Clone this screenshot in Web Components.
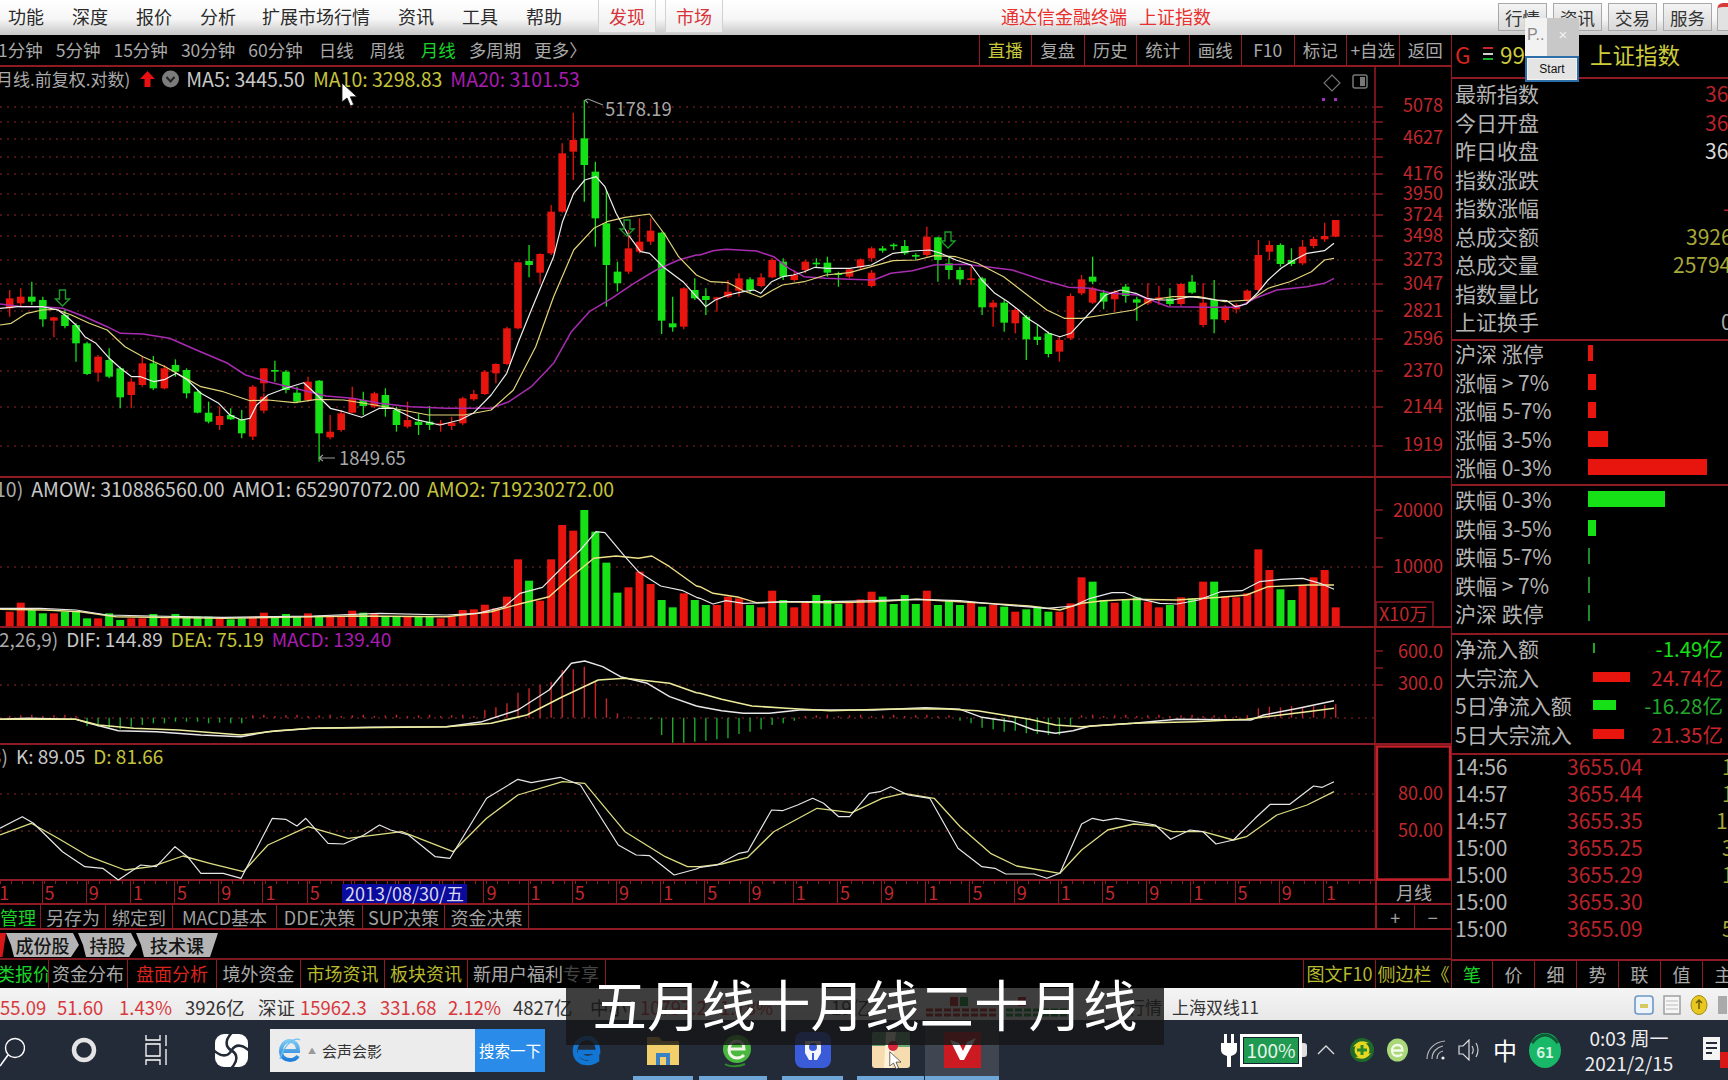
<!DOCTYPE html>
<html lang="zh">
<head>
<meta charset="utf-8">
<title>通达信金融终端</title>
<style>
html,body{margin:0;padding:0;background:#000;width:1728px;height:1080px;overflow:hidden;
  font-family:"Noto Sans CJK SC","Noto Sans",sans-serif;}
.work{display:flex;height:953px;}
.left{width:1451px;flex:none;}
</style>
</head>
<body>
<tdx-menubar></tdx-menubar>
<div class="work">
  <div class="left">
    <tdx-period-bar></tdx-period-bar>
    <tdx-price-chart top="67" height="411">
      <span style="margin-left:-4px;color:#aaa;font-size:17px">月线.前复权.对数)</span>
      <tdx-legend-icons></tdx-legend-icons>
      <span style="color:#c8c8c8">MA5: 3445.50</span>
      <span style="color:#c4c43c">MA10: 3298.83</span>
      <span style="color:#a81cb0">MA20: 3101.53</span>
    </tdx-price-chart>
    <tdx-volume-chart top="478" height="150">
      <span style="margin-left:-5px;color:#aaa">10)</span>
      <span style="color:#c8c8c8">AMOW: 310886560.00</span>
      <span style="color:#c8c8c8">AMO1: 652907072.00</span>
      <span style="color:#c4c43c;margin-left:-1px">AMO2: 719230272.00</span>
    </tdx-volume-chart>
    <tdx-macd-chart top="628" height="117">
      <span style="margin-left:-1px;color:#aaa;font-size:19px">2,26,9)</span>
      <span style="color:#c8c8c8;font-size:19px">DIF: 144.89</span>
      <span style="color:#c4c43c;font-size:19px">DEA: 75.19</span>
      <span style="color:#a81cb0;font-size:19px">MACD: 139.40</span>
    </tdx-macd-chart>
    <tdx-kdj-chart top="745" height="136">
      <span style="margin-left:-9px;color:#aaa;font-size:19px">3)</span>
      <span style="color:#c8c8c8;font-size:19px">K: 89.05</span>
      <span style="color:#c4c43c;font-size:19px">D: 81.66</span>
    </tdx-kdj-chart>
    <tdx-time-axis></tdx-time-axis>
    <tdx-tool-row></tdx-tool-row>
    <tdx-tab-row></tdx-tab-row>
    <tdx-bottom-tabs></tdx-bottom-tabs>
  </div>
  <tdx-side-panel></tdx-side-panel>
</div>
<tdx-status-bar></tdx-status-bar>
<tdx-taskbar></tdx-taskbar>
<tdx-float-window></tdx-float-window>
<tdx-caption>五月线十月线二十月线</tdx-caption>
<tdx-cursor style="left:341px;top:82px"></tdx-cursor>
<tdx-cursor style="left:889px;top:1051px;transform:scale(.75);transform-origin:0 0"></tdx-cursor>

<script>
(function () {

var RED = "#e8140e", GREEN = "#16e016", LINE = "#8f1a22", AXIS = "#c0282e";

// candles read off the reference: [colour, body top, body bottom, high, low]
// y is in crop units, page y = 80 + z / 3
var CANDLES = [
"r 655 685 630 710","r 650 670 625 680","g 650 665 605 675","g 660 718 650 740","r 712 722 710 772",
"g 705 738 690 745","g 735 790 730 845","g 790 882 785 885","r 830 878 825 905","g 840 890 805 895",
"g 865 952 860 985","r 905 945 895 985","r 850 915 830 920","g 850 925 828 930","r 865 925 855 928",
"g 855 875 838 890","g 870 940 865 955","g 935 998 930 1000","g 998 1025 965 1030","r 1008 1035 980 1050",
"g 1005 1018 985 1020","g 1018 1060 990 1075","r 920 1070 915 1080","r 950 992 940 1000","g 870 875 842 905",
"g 875 930 870 940","g 938 965 920 970","r 905 960 890 965","g 902 1060 900 1145","r 1055 1072 1005 1078",
"r 1000 1050 990 1055","r 955 998 920 1000","g 960 978 935 1005","r 940 980 935 985","g 945 985 925 1010",
"g 990 1035 980 1055","r 1020 1040 965 1045","g 1025 1035 1000 1065","g 1025 1035 978 1050","r 1030 1035 1020 1055",
"r 1028 1038 1010 1050","r 955 1030 950 1035","r 942 958 930 962","r 875 942 870 945","r 852 880 850 910",
"r 745 852 740 855","r 547 745 545 748","g 543 555 495 592","r 522 578 520 610","r 395 520 375 525",
"r 220 395 190 398","r 180 215 98 300","g 175 255 60 365","g 275 415 245 500","g 430 555 330 680",
"g 575 610 545 635","r 505 575 450 582","r 485 515 415 520","r 452 485 415 495","g 458 722 455 762",
"g 730 742 650 755","r 625 740 622 748","g 630 655 595 660","g 648 660 625 705","r 652 658 650 695",
"r 635 650 600 655","r 595 632 580 650","g 598 630 592 640","r 592 618 580 622","r 540 592 535 595",
"g 545 590 535 600","r 585 600 570 605","r 545 570 540 580","g 548 553 535 562","g 548 578 530 590",
"g 580 585 575 620","r 568 590 565 595","r 538 562 535 570","r 505 535 500 545","g 505 512 498 518",
"g 494 498 490 510","g 498 520 480 525","g 525 530 520 540","r 470 525 440 530","g 472 540 470 605",
"g 550 570 530 598","g 570 598 560 615","r 595 598 560 615","g 595 682 590 705","r 668 682 660 740",
"g 668 728 660 755","r 690 730 685 760","g 710 778 705 840","g 770 780 735 795","g 760 822 755 832",
"r 780 815 770 845","r 648 775 640 780","r 598 640 585 645","g 590 605 530 612","g 638 665 630 688",
"r 635 658 630 695","g 620 648 612 668","g 658 668 650 722","r 655 670 610 675","r 652 660 618 675",
"g 655 672 625 678","r 612 672 608 678","g 605 638 585 642","r 668 735 610 742","g 660 718 600 760",
"r 680 720 675 728","r 675 688 670 700","r 632 662 628 670","r 525 630 480 635","r 495 515 482 540",
"g 495 552 490 560","g 540 552 505 558","r 500 550 480 555","r 477 498 470 505","r 468 478 428 485",
"r 420 470 420 472"];
// the few spots where the picture has a second body on the same column
var CANDLE_EXTRA = [[23,"r 865 910 865 935"],[78,"r 578 618 570 622"],[98,"r 625 668 620 672"]];

// volume bar tops, page y = 470 + z / 3
var VOLUME = [425,398,420,430,430,425,425,445,445,430,450,445,445,432,445,432,440,440,440,445,448,445,440,428,438,432,440,430,440,440,438,422,428,430,438,440,440,440,440,445,440,420,418,404,415,380,268,332,392,268,165,182,120,185,278,368,352,305,342,390,412,370,390,
405,405,380,385,405,412,362,390,412,398,375,390,402,398,388,365,380,402,375,402,362,405,390,405,398,410,405,410,425,418,410,425,425,400,322,335,390,398,388,382,395,412,405,382,385,335,335,380,382,370,238,300,358,390,345,322,300,412];

var MACD = {};
[[7,768],[8,770],[9,775],[10,778],[11,770],[12,765],[13,760],[14,760],[15,755],[16,755],[17,755],[18,760],[19,758],[20,760],[21,760],
 [43,720],[44,712],[45,700],[46,668],[47,655],[48,645],[49,635],[50,600],[51,598],[52,590],[53,635],[54,685],[55,730],[56,740],[57,745],[58,748],
 [59,795],[60,818],[61,818],[62,815],[63,812],[64,808],[65,805],[66,792],[67,785],[68,778],[69,765],[70,760],[71,752],
 [86,752],[87,760],[88,773],[89,778],[90,785],[91,782],[92,790],[93,792],[94,795],[95,795],[96,765],
 [113,715],[114,710],[115,712],[116,708],[117,712],[118,708],[119,705],[120,703]].forEach(function (p) { MACD[p[0]] = p[1]; });

function candleX(i) { return 9.7 + 11.05 * i; }

// line points come from two crops with their own x scale
function linePoints(left, right, y0) {
    var out = [];
    left.forEach(function (p) { out.push((p[0] / 2.24).toFixed(1) + "," + (y0 + p[1] / 3).toFixed(1)); });
    right.forEach(function (p) { out.push((700 + p[0] / 2.306).toFixed(1) + "," + (y0 + p[1] / 3).toFixed(1)); });
    return out.join(" ");
}

function polyline(points, color, width) {
    return '<polyline fill="none" stroke-linejoin="round" points="' + points + '" stroke="' + color + '" stroke-width="' + (width || 1.3) + '"/>';
}

class ChartPane extends HTMLElement {

    constructor() {
        super();
        this.attachShadow({ mode: "open" });
        var top = +this.getAttribute("top"), h = +this.getAttribute("height");
        this.top = top;
        this.h = h;
        this.shadowRoot.innerHTML = `
        <style>
        :host{display:block;position:relative;width:1451px;height:${h}px;overflow:hidden;}
        svg{display:block;}
        .legend{position:absolute;left:0;top:${top == 67 ? 0 : -1}px;display:flex;align-items:center;gap:8px;
            font-size:19.5px;line-height:24px;white-space:nowrap;}
        text{font-size:18px;fill:${AXIS};}
        </style>
        <svg width="1451" height="${h}" viewBox="0 ${top} 1451 ${h}"></svg>
        <div class="legend"><slot></slot></div>
        `;
    }

    connectedCallback() {
        this.shadowRoot.querySelector("svg").innerHTML = this.frame() + this.plot();
    }

    // grid, ticks, labels and the pane borders. Subclasses give the numbers.
    frame() {
        var s = "", t = this.top, h = this.h;
        this.grid().forEach(function (y) {
            s += '<line x1="0" x2="1375" y1="' + y + '" y2="' + y + '" stroke="#8a2a2c" stroke-width="1.2" stroke-dasharray="2 5"/>';
        });
        this.ticks().forEach(function (y) {
            s += '<line x1="1375" x2="1383" y1="' + y + '" y2="' + y + '" stroke="' + LINE + '" stroke-width="1.4"/>';
        });
        this.labels().forEach(function (l) {
            s += '<text x="1443" y="' + (l[1] + 6.5) + '" text-anchor="end">' + l[0] + '</text>';
        });
        s += '<line x1="1375" x2="1375" y1="' + t + '" y2="' + (t + h) + '" stroke="' + LINE + '" stroke-width="1.6"/>';
        s += '<line x1="0" x2="1451" y1="' + (t + h - 1) + '" y2="' + (t + h - 1) + '" stroke="' + LINE + '" stroke-width="2"/>';
        return s;
    }
    grid() { return []; }
    ticks() { return []; }
    labels() { return []; }
    plot() { return ""; }
}

class PriceChart extends ChartPane {
    grid() { return [107,122,139,157,174,194,215,236,260,284,311,339,371,407,446]; }
    ticks() { return [107,122,139,157,174,194,215,236,260,284,311,339,371,407,446]; }
    labels() {
        return [["5078",105],["4627",137],["4176",173],["3950",193],["3724",214],["3498",235],["3273",259],
                ["3047",283],["2821",310],["2596",338],["2370",370],["2144",406],["1919",444]];
    }
    candle(i, spec) {
        var p = spec.split(" "), c = p[0] == "r" ? RED : GREEN, x = candleX(i);
        var top = 80 + p[1] / 3, bot = 80 + p[2] / 3;
        return '<line x1="' + x + '" x2="' + x + '" y1="' + (80 + p[3] / 3) + '" y2="' + (80 + p[4] / 3) + '" stroke="' + c + '" stroke-width="1.3"/>' +
            '<rect x="' + (x - 3.8) + '" y="' + top + '" width="7.6" height="' + Math.max(bot - top, 1.6) + '" fill="' + c + '"/>';
    }
    plot() {
        var s = "", self = this;
        CANDLES.forEach(function (c, i) { s += self.candle(i, c); });
        CANDLE_EXTRA.forEach(function (e) { s += self.candle(e[0], e[1]); });

        s += polyline(linePoints(
            [[0,672],[50,680],[95,680],[140,685],[190,710],[240,740],[270,760],[320,762],[380,775],[440,810],[510,850],[550,885],[600,905],[660,925],[730,948],[790,955],[850,970],[920,980],[1000,985],[1100,985],[1140,965],[1190,920],[1240,850],[1280,755],[1320,695],[1370,655],[1420,610],[1470,570],[1520,540],[1560,525]],
            [[0,525],[30,512],[60,508],[130,513],[170,530],[205,565],[240,590],[290,595],[345,598],[400,600],[440,580],[490,572],[540,555],[610,553],[660,560],[720,570],[790,600],[850,622],[900,625],[950,640],[1010,645],[1080,680],[1170,682],[1240,682],[1280,655],[1330,630],[1400,620],[1440,610],[1462,595]], 80), "#a82cb0", 1.5);
        s += polyline(linePoints(
            [[0,735],[25,730],[60,700],[95,690],[125,688],[160,705],[200,730],[240,750],[280,800],[320,830],[370,860],[410,890],[450,920],[500,935],[560,962],[600,960],[660,968],[710,958],[770,960],[840,975],[900,990],[960,1005],[1040,1005],[1100,990],[1150,930],[1200,800],[1240,650],[1285,510],[1330,445],[1360,425],[1400,412],[1455,402],[1490,465],[1520,530],[1560,585]],
            [[0,590],[25,605],[65,608],[100,632],[140,652],[165,632],[190,615],[240,605],[290,585],[345,578],[395,560],[445,542],[500,540],[540,527],[590,530],[640,550],[700,590],[760,650],[800,690],[840,715],[880,715],[930,705],[1000,690],[1040,660],[1090,650],[1150,650],[1210,665],[1270,660],[1310,625],[1360,605],[1410,575],[1440,540],[1462,535]], 80), "#e2d478", 1.2);
        s += polyline(linePoints(
            [[0,685],[40,680],[95,680],[130,690],[150,710],[170,735],[190,770],[215,790],[245,835],[270,865],[295,890],[315,890],[345,905],[370,898],[395,880],[420,900],[450,940],[490,970],[515,1005],[540,1020],[560,1015],[575,975],[600,945],[640,925],[680,908],[710,945],[740,985],[770,995],[810,1012],[850,985],[880,985],[930,1018],[985,1035],[1030,1020],[1060,1000],[1100,945],[1135,880],[1160,790],[1190,690],[1215,610],[1240,530],[1260,425],[1285,340],[1310,300],[1335,290],[1355,320],[1380,400],[1405,460],[1435,515],[1455,520],[1485,560],[1530,605],[1560,650]],
            [[0,660],[13,680],[35,660],[65,645],[100,635],[125,630],[140,640],[165,605],[190,590],[215,585],[240,575],[265,562],[295,565],[345,565],[395,555],[445,520],[490,513],[530,510],[555,520],[590,540],[625,555],[650,600],[680,640],[710,665],[735,690],[755,715],[780,735],[805,760],[830,770],[855,760],[880,725],[905,690],[935,645],[970,630],[1005,640],[1030,655],[1060,660],[1090,660],[1130,650],[1165,655],[1190,660],[1215,662],[1235,680],[1260,672],[1285,640],[1310,600],[1340,565],[1370,540],[1400,520],[1440,512],[1462,490]], 80), "#eeeeee", 1.2);

        // hollow down arrows on the turning points
        [[62.5,298],[627,228],[948,240]].forEach(function (a) {
            s += '<path transform="translate(' + (a[0] - 7) + ' ' + (a[1] - 8) + ')" d="M4 0h6v9h4l-7 7-7-7h4z" fill="none" stroke="#1c9a2a" stroke-width="1.4"/>';
        });

        // high and low marks
        s += '<path d="M585 100l3-1 15 6M585 100l3 3" fill="none" stroke="#999" stroke-width="1.1"/>';
        s += '<text x="605" y="115.5" style="fill:#a8a8a8;font-size:18.5px">5178.19</text>';
        s += '<path d="M319 458h16M319 458l4-3M319 458l4 3" fill="none" stroke="#999" stroke-width="1.1"/>';
        s += '<text x="339" y="464.5" style="fill:#a8a8a8;font-size:18.5px">1849.65</text>';

        // corner tools
        s += '<path d="M1332 75l8 8-8 8-8-8z" fill="none" stroke="#777" stroke-width="1.1"/>';
        s += '<rect x="1353" y="75" width="14" height="13" rx="2" fill="none" stroke="#777" stroke-width="1.5"/><rect x="1360" y="77" width="5" height="9" fill="#777"/>';
        s += '<rect x="1322" y="98" width="3" height="3" fill="#a030c0"/><rect x="1334" y="98" width="3" height="3" fill="#a030c0"/>';
        return s;
    }
}

class VolumeChart extends ChartPane {
    grid() { return [567]; }
    ticks() { return [510,538,567]; }
    labels() { return [["20000",510],["10000",566]]; }
    plot() {
        var s = "";
        VOLUME.forEach(function (z, i) {
            var c = CANDLES[i].charAt(0) == "r" ? RED : GREEN, y = 470 + z / 3;
            s += '<rect x="' + (candleX(i) - 4) + '" y="' + y + '" width="8" height="' + (626 - y) + '" fill="' + c + '"/>';
        });
        s += polyline(linePoints(
            [[0,418],[100,420],[180,425],[260,440],[500,445],[800,438],[1000,440],[1100,425],[1170,400],[1230,380],[1280,320],[1330,265],[1380,258],[1430,265],[1460,258],[1500,290],[1560,348]],
            [[0,350],[30,370],[90,382],[130,398],[200,395],[300,398],[400,395],[500,388],[640,398],[760,408],[830,420],[880,400],[930,392],[1000,388],[1100,390],[1200,382],[1260,375],[1310,350],[1400,345],[1462,345]], 470), "#f0e088", 1.4);
        s += polyline(linePoints(
            [[0,415],[90,415],[170,420],[240,435],[340,438],[500,442],[700,438],[850,430],[1000,435],[1070,430],[1130,410],[1165,370],[1215,352],[1265,285],[1300,240],[1335,185],[1355,188],[1400,260],[1430,305],[1480,348],[1530,362],[1560,382]],
            [[0,385],[30,402],[60,392],[100,400],[150,398],[200,395],[300,395],[400,392],[500,388],[600,392],[700,405],[800,415],[860,408],[900,385],[950,368],[980,368],[1010,385],[1060,400],[1100,402],[1150,390],[1200,365],[1250,362],[1290,335],[1340,328],[1390,325],[1430,340],[1462,358]], 470), "#e8e8e8", 1.2);
        s += '<rect x="1376" y="602" width="57" height="25" fill="none" stroke="' + LINE + '" stroke-width="1.4"/>';
        s += '<text x="1379" y="621">X10万</text>';
        return s;
    }
}

class MacdChart extends ChartPane {
    grid() { return [685,718]; }
    ticks() { return [651,668,685]; }
    labels() { return [["600.0",651],["300.0",683]]; }
    plot() {
        var s = "";
        for (var i = 0; i < 121; i++) {
            var z = MACD[i] !== undefined ? MACD[i] : 738 - (i % 3) * 2;
            var y = 470 + z / 3;
            s += '<line x1="' + candleX(i) + '" x2="' + candleX(i) + '" y1="717.7" y2="' + y + '" stroke="' + (z < 744 ? "#c8242a" : "#1ea82a") + '" stroke-width="1.4"/>';
        }
        s += polyline(linePoints(
            [[0,748],[60,745],[170,748],[200,760],[265,782],[350,785],[450,795],[540,800],[600,785],[700,775],[830,772],[1000,770],[1080,755],[1160,720],[1230,660],[1280,580],[1310,573],[1350,590],[1390,620],[1450,640],[1500,680],[1560,708]],
            [[0,710],[50,722],[100,730],[160,730],[230,720],[400,720],[520,713],[600,718],[650,742],[720,755],[770,780],[820,790],[860,782],[900,768],[1000,760],[1100,748],[1270,750],[1300,735],[1380,715],[1462,692]], 470), "#e8e8e8", 1.4);
        s += polyline(linePoints(
            [[0,748],[170,748],[220,765],[300,775],[400,780],[540,795],[620,782],[700,775],[1000,770],[1100,760],[1180,735],[1260,680],[1340,630],[1400,625],[1500,640],[1560,668]],
            [[0,670],[50,688],[120,708],[200,715],[300,722],[420,718],[560,716],[640,722],[700,735],[760,748],[820,765],[880,770],[1000,760],[1140,755],[1260,748],[1320,738],[1400,725],[1462,715]], 470), "#ecec9a", 1.6);
        return s;
    }
}

class KdjChart extends ChartPane {
    grid() { return [794,831]; }
    ticks() { return []; }
    labels() { return [["80.00",793],["50.00",830]]; }
    plot() {
        var s = "";
        s += polyline(linePoints(
            [[0,1095],[70,1060],[130,1105],[200,1160],[280,1200],[340,1190],[410,1158],[470,1180],[545,1205],[600,1125],[690,1070],[780,1105],[900,1085],[1015,1145],[1090,1045],[1160,975],[1260,935],[1310,940],[1400,1085],[1490,1160],[1540,1190],[1560,1190]],
            [[0,1190],[50,1182],[110,1162],[170,1085],[220,1050],[270,1015],[350,1028],[420,985],[470,970],[540,985],[600,1070],[670,1150],[730,1188],[830,1210],[880,1140],[940,1080],[1000,1062],[1050,1068],[1090,1085],[1160,1085],[1230,1110],[1260,1100],[1330,1035],[1400,1005],[1462,965]], 470), "#dcdc80", 1.3);
        s += polyline(linePoints(
            [[0,1075],[50,1040],[75,1060],[140,1145],[190,1190],[230,1195],[265,1230],[315,1185],[350,1190],[392,1130],[420,1160],[450,1210],[500,1210],[540,1225],[610,1045],[640,1048],[665,1068],[685,1045],[735,1120],[770,1122],[815,1095],[850,1065],[875,1080],[915,1095],[975,1160],[1008,1165],[1090,985],[1160,928],[1190,938],[1255,922],[1300,945],[1385,1125],[1425,1155],[1455,1157],[1510,1215],[1560,1197]],
            [[0,1192],[40,1185],[90,1150],[110,1145],[165,1020],[190,1022],[225,1005],[260,985],[285,1000],[320,1040],[345,1040],[390,970],[415,965],[440,950],[480,975],[530,985],[595,1135],[650,1190],[680,1195],[705,1212],[770,1212],[800,1225],[830,1210],[880,1062],[905,1045],[930,1052],[960,1045],[1050,1065],[1085,1108],[1130,1080],[1160,1085],[1190,1122],[1230,1110],[1280,1045],[1315,1003],[1360,1003],[1415,948],[1435,952],[1462,935]], 470), "#e6e6e6", 1.2);
        s += '<rect x="1377" y="746.5" width="73" height="133" fill="none" stroke="#c4202a" stroke-width="2.4"/>';
        return s;
    }
}

class LegendIcons extends HTMLElement {
    constructor() {
        super();
        this.attachShadow({ mode: "open" });
        this.shadowRoot.innerHTML = `
        <style>:host{display:flex;align-items:center;gap:6px;margin:0 -1px 0 1px;}svg{display:block;}</style>
        <svg width="17" height="20" viewBox="0 0 17 20"><path d="M8.5 2L16 10h-4.5v8h-6v-8H1z" fill="#e81010"/></svg>
        <svg width="17" height="18" viewBox="0 0 17 18"><circle cx="8.5" cy="9" r="8.5" fill="#7c7c7c"/><path d="M4.5 7l4 4.5 4-4.5" fill="none" stroke="#222" stroke-width="2"/></svg>
        `;
    }
}

class MenuBar extends HTMLElement {
    constructor() {
        super();
        this.attachShadow({ mode: "open" });
        var items = ["功能","深度","报价","分析","扩展市场行情","资讯","工具","帮助"];
        var right = ["行情","资讯","交易","服务"];
        this.shadowRoot.innerHTML = `
        <style>
        :host{display:flex;height:35px;box-sizing:border-box;padding-left:8px;font-size:18px;line-height:33px;color:#2a2a2a;
            background:linear-gradient(#ffffff,#f6f6f6 55%,#c6c6c6);white-space:nowrap;}
        .menu{display:flex;gap:28px;}
        .menu span:nth-child(5){margin-left:-2px;}
        .hot{width:58px;height:33px;text-align:center;color:#d8343a;box-sizing:border-box;
            border:1px solid #d2d2d2;border-top:none;background:linear-gradient(#fff,#ececec);}
        .hot.first{margin-left:36px;}
        .hot.second{margin-left:9px;}
        .title{margin-left:278px;color:#e8302c;}
        .title b{font-weight:400;margin-left:12px;}
        .right{margin-left:auto;display:flex;gap:6px;padding-top:3px;}
        .btn{width:49px;height:28px;line-height:27px;box-sizing:border-box;text-align:center;font-size:17.5px;
            border:1px solid #a8a8a8;background:linear-gradient(#f4f4f4,#d8d8d8);color:#333;}
        .stub{width:11px;height:28px;box-sizing:border-box;background:#e2e2e2;border:1px solid #a8a8a8;border-right:none;
            border-top:4px solid #d83a3a;border-radius:6px 0 0 0;margin-left:-1px;}
        </style>
        <div class="menu">${items.map(function (t) { return "<span>" + t + "</span>"; }).join("")}</div>
        <div class="hot first">发现</div>
        <div class="hot second">市场</div>
        <div class="title">通达信金融终端<b>上证指数</b></div>
        <div class="right">${right.map(function (t) { return '<div class="btn">' + t + "</div>"; }).join("")}<div class="stub"></div></div>
        `;
    }
}

class PeriodBar extends HTMLElement {
    constructor() {
        super();
        this.attachShadow({ mode: "open" });
        var left = ["1分钟","5分钟","15分钟","30分钟","60分钟","日线","周线","月线","多周期","更多〉"];
        var right = ["直播","复盘","历史","统计","画线","F10","标记","+自选","返回"];
        this.shadowRoot.innerHTML = `
        <style>
        :host{display:flex;width:1451px;height:32px;box-sizing:border-box;border-bottom:2px solid ${LINE};
            font-size:17.5px;line-height:30px;color:#a8a8a8;white-space:nowrap;}
        .left{display:flex;gap:13px;margin-left:-2px;}
        .wide{margin-left:3px;}
        .on{color:#19d428;}
        .right{margin-left:auto;display:flex;}
        .right div{width:52.5px;text-align:center;box-sizing:border-box;border-left:1px solid ${LINE};}
        .right .live{color:#c8c83c;}
        </style>
        <div class="left">${left.map(function (t) {
            var cls = t == "月线" ? "wide on" : (t.length == 2 ? "wide" : "");
            return '<span class="' + cls + '">' + t + "</span>";
        }).join("")}</div>
        <div class="right">${right.map(function (t, i) {
            return "<div" + (i == 0 ? ' class="live"' : "") + ">" + t + "</div>";
        }).join("")}</div>
        `;
    }
}

class TimeAxis extends HTMLElement {
    constructor() {
        super();
        this.attachShadow({ mode: "open" });
        var cells = "", marks = ["1","5","9"];
        for (var i = 0; i < 31; i++) {
            cells += '<div class="cell">' + marks[i % 3] + "</div>";
        }
        this.shadowRoot.innerHTML = `
        <style>
        :host{display:flex;position:relative;width:1451px;height:24px;box-sizing:border-box;
            border-bottom:2px solid ${LINE};font-size:18px;line-height:23px;color:${AXIS};white-space:nowrap;}
        .track{width:1375px;flex:none;display:flex;overflow:hidden;box-sizing:border-box;
            background:repeating-linear-gradient(90deg,${LINE} 0 1px,transparent 1px 11.05px) 0 0/100% 3px no-repeat;}
        .cell{width:44.2px;flex:none;box-sizing:border-box;padding-left:2px;border-left:1px solid ${LINE};}
        .cell:first-child{margin-left:-2.7px;border-left:none;}
        .date{position:absolute;left:342px;top:3px;width:125px;height:19px;line-height:19px;background:#0a0a9c;
            color:#d8d8f0;text-align:center;font-size:18px;}
        .unit{flex:1;border-left:2px solid ${LINE};text-align:center;color:#a8a8a8;box-sizing:border-box;}
        </style>
        <div class="track">${cells}</div>
        <div class="date">2013/08/30/五</div>
        <div class="unit">月线</div>
        `;
    }
}

class ToolRow extends HTMLElement {
    constructor() {
        super();
        this.attachShadow({ mode: "open" });
        var items = [["管理",41],["另存为",65],["绑定到",67],["MACD基本",104],["DDE决策",86],["SUP决策",82],["资金决策",84]];
        this.shadowRoot.innerHTML = `
        <style>
        :host{display:flex;width:1451px;height:25px;box-sizing:border-box;border-bottom:2px solid ${LINE};
            font-size:18px;line-height:24px;color:#a0a0a0;white-space:nowrap;}
        .tools{width:1375px;flex:none;display:flex;}
        .tools div{display:flex;justify-content:center;box-sizing:border-box;border-right:1px solid ${LINE};overflow:hidden;}
        .tools div:first-child{color:#19d428;justify-content:flex-end;padding-right:4px;}
        .zoom{flex:1;display:flex;border-left:2px solid ${LINE};text-align:center;}
        .zoom div{flex:1;}
        .zoom div:first-child{border-right:1px solid ${LINE};}
        </style>
        <div class="tools">${items.map(function (t) {
            return '<div style="width:' + t[1] + 'px">' + t[0] + "</div>";
        }).join("")}</div>
        <div class="zoom"><div>+</div><div>−</div></div>
        `;
    }
}

class TabRow extends HTMLElement {
    constructor() {
        super();
        this.attachShadow({ mode: "open" });
        this.shadowRoot.innerHTML = `
        <style>
        :host{display:flex;width:1451px;height:30px;box-sizing:border-box;border-bottom:2px solid #7a1820;padding-top:3px;
            font-size:18px;line-height:24px;color:#151515;white-space:nowrap;font-weight:500;}
        .stub{width:6px;height:24px;background:#d81818;clip-path:polygon(0 0,100% 0,40% 100%,0 100%);}
        .tab{height:24px;background:#b4b4b4;text-align:center;margin-left:-1px;
            clip-path:polygon(0 0,calc(100% - 6px) 0,100% 50%,calc(100% - 8px) 100%,8px 100%,5px 50%);}
        </style>
        <div class="stub"></div>
        <div class="tab" style="width:73px;margin-left:0">成份股</div>
        <div class="tab" style="width:59px;margin-left:-1px">持股</div>
        <div class="tab" style="width:82px;margin-left:-1px;clip-path:polygon(0 0,100% 0,calc(100% - 8px) 100%,8px 100%,5px 50%)">技术课</div>
        `;
    }
}

class BottomTabs extends HTMLElement {
    constructor() {
        super();
        this.attachShadow({ mode: "open" });
        var items = [["类报价",49,"#19d428"],["资金分布",79,"#a8a8a8"],["盘面分析",89,"#d8241c"],["境外资金",84,"#a8a8a8"],
                     ["市场资讯",84,"#b8b82c"],["板块资讯",83,"#b8b82c"]];
        this.shadowRoot.innerHTML = `
        <style>
        :host{display:flex;width:1451px;height:28px;font-size:18px;line-height:26px;white-space:nowrap;}
        .t{display:flex;justify-content:center;box-sizing:border-box;border-right:1px solid ${LINE};overflow:hidden;}
        .t:first-child{justify-content:flex-end;padding-right:4px;}
        .fade{width:138px;color:#a8a8a8;text-align:left;padding-left:5px;box-sizing:border-box;border-right:1px solid ${LINE};}
        .fade i{font-style:normal;color:#444;}
        .end{margin-left:auto;display:flex;color:#b8b82c;}
        .end div{box-sizing:border-box;border-left:1px solid ${LINE};text-align:center;}
        </style>
        ${items.map(function (t) {
            return '<div class="t" style="width:' + t[1] + "px;color:" + t[2] + '">' + t[0] + "</div>";
        }).join("")}
        <div class="fade">新用户福利<i>专享</i></div>
        <div class="end"><div style="width:72px">图文F10</div><div style="width:76px">侧边栏《</div></div>
        `;
    }
}

class SidePanel extends HTMLElement {
    constructor() {
        super();
        this.attachShadow({ mode: "open" });

        var quote = [["最新指数","36","#b8222a",250],["今日开盘","36","#b8222a",250],["昨日收盘","36","#d8d8d8",250],
                     ["指数涨跌","","",0],["指数涨幅","-","#b8222a",268],["总成交额","3926","#a8a838",231],
                     ["总成交量","25794","#a8a838",218],["指数量比","","",0],["上证换手","0","#a8a8a8",266]];
        var up = [["沪深 涨停",5],["涨幅 &gt; 7%",8],["涨幅 5-7%",8],["涨幅 3-5%",20],["涨幅 0-3%",119]];
        var down = [["跌幅 0-3%",77,16],["跌幅 3-5%",8,16],["跌幅 5-7%",2,16],["跌幅 &gt; 7%",2,16],["沪深 跌停",2,16]];
        var flow = [["净流入额",2,"-1.49亿",GREEN,"#1ea82a"],["大宗流入",37,"24.74亿","#c8242a",RED],
                    ["5日净流入额",23,"-16.28亿","#22a82e",GREEN],["5日大宗流入",31,"21.35亿","#c8242a",RED]];
        var ticks = [["14:56","3655.04","1"],["14:57","3655.44","1"],["14:57","3655.35","14"],["15:00","3655.25","3"],
                     ["15:00","3655.29","1"],["15:00","3655.30",""],["15:00","3655.09","5"]];
        var tabs = ["笔","价","细","势","联","值","主"];

        this.shadowRoot.innerHTML = `
        <style>
        :host{display:block;width:277px;height:953px;box-sizing:border-box;border-left:1.5px solid ${LINE};
            font-size:21px;color:#b4b4b4;white-space:nowrap;overflow:hidden;}
        section{box-sizing:border-box;border-bottom:2px solid ${LINE};padding-left:3px;overflow:hidden;}
        .head{height:44px;display:flex;align-items:center;font-size:22.5px;color:#cccc3c;padding:0 0 5px 3px;}
        .g{color:#d8241c;width:28px;}
        .eq{width:10px;height:13px;margin-right:7px;
            background:linear-gradient(#c8242a 0 2px,transparent 2px 5.5px,#d0d0d0 5.5px 7.5px,transparent 7.5px 11px,#18b02a 11px 13px);}
        .head b{font-weight:400;margin-left:15px;}
        .quote{height:262px;}
        .row{height:28.5px;line-height:28.5px;position:relative;}
        .row em{position:absolute;top:0;font-style:normal;}
        .up{height:145px;}
        .up .row:first-child{margin-top:-2px;}
        .down{height:149px;}
        .down .row:first-child{margin-top:-1px;}
        .bars{display:flex;align-items:center;}
        .bars label{width:133px;flex:none;}
        .bars i{display:block;height:16px;}
        .flow{height:120px;}
        .flow .row:first-child{margin-top:-1px;}
        .flow .bars label{width:138px;}
        .flow i{height:10px !important;}
        .flow em{right:5px;font-size:20.5px;}
        .ticks{height:206px;font-size:21px;}
        .tick{height:27px;line-height:27px;display:grid;grid-template-columns:112px 155px 1fr;}
        .tick:first-child{margin-top:-2px;}
        .tick span:nth-child(2){color:#b8222a;}
        .tick span:nth-child(3){color:#a8a838;}
        .tabs{display:flex;height:28px;font-size:18px;line-height:26px;color:#a8a8a8;}
        .tabs div{width:42px;flex:none;text-align:center;box-sizing:border-box;border-right:1px solid ${LINE};}
        .tabs div:first-child{color:#19d428;width:41px;}
        </style>
        <section class="head"><span class="g">G</span><span class="eq"></span>999999<b>上证指数</b></section>
        <section class="quote">${quote.map(function (q) {
            return '<div class="row">' + q[0] + (q[1] ? '<em style="left:' + q[3] + "px;color:" + q[2] + '">' + q[1] + "</em>" : "") + "</div>";
        }).join("")}</section>
        <section class="up">${up.map(function (u) {
            return '<div class="row bars"><label>' + u[0] + '</label><i style="width:' + u[1] + "px;background:" + RED + '"></i></div>';
        }).join("")}</section>
        <section class="down">${down.map(function (u) {
            return '<div class="row bars"><label>' + u[0] + '</label><i style="width:' + u[1] + "px;background:" + (u[1] > 2 ? GREEN : "#1e8a2a") + '"></i></div>';
        }).join("")}</section>
        <section class="flow">${flow.map(function (f) {
            return '<div class="row bars"><label>' + f[0] + '</label><i style="width:' + f[1] + "px;background:" + f[4] + '"></i><em style="color:' + f[3] + '">' + f[2] + "</em></div>";
        }).join("")}</section>
        <section class="ticks">${ticks.map(function (t) {
            var shift = t[2].length > 1 ? "margin-left:-6px" : "";
            return '<div class="tick"><span>' + t[0] + "</span><span>" + t[1] + '</span><span style="' + shift + '">' + t[2] + "</span></div>";
        }).join("")}</section>
        <div class="tabs">${tabs.map(function (t) { return "<div>" + t + "</div>"; }).join("")}</div>
        `;
    }
}

class StatusBar extends HTMLElement {
    constructor() {
        super();
        this.attachShadow({ mode: "open" });
        var R = "#d8383c", D = "#333";
        var items = [["55.09",R,57],["51.60",R,62],["1.43%",R,66],["3926亿",D,73],["深证",D,42],["15962.3",R,80],["331.68",R,68],
                     ["2.12%",R,65],["4827亿",D,77],["中小",D,50],["10797.2",R,80],["1.78%",R,111],["19亿",D,95]];
        this.shadowRoot.innerHTML = `
        <style>
        :host{display:flex;height:32px;background:linear-gradient(#f4f4f4,#e8e8e8);align-items:center;box-sizing:border-box;padding-top:5px;
            font-size:18.5px;line-height:26px;white-space:nowrap;overflow:hidden;position:relative;}
        span{flex:none;}
        svg{display:block;flex:none;}
        .name{color:#333;font-size:17px;}
        .icons{position:absolute;left:1634px;top:7px;display:flex;gap:9px;}
        </style>
        ${items.map(function (t) {
            return '<span style="width:' + t[2] + "px;color:" + t[1] + '">' + t[0] + "</span>";
        }).join("")}
        <svg width="142" height="22" viewBox="0 0 142 22" style="margin-right:60px">
            <rect x="24" y="1" width="8" height="9" fill="#c02020"/><rect x="34" y="1" width="8" height="9" fill="#109028"/>
            <rect x="92" y="1" width="8" height="9" fill="#c02020"/>
            <path d="M0 14h72M0 19h72" stroke="#c02020" stroke-width="3" stroke-dasharray="7 2"/>
            <path d="M80 14h62M80 19h62" stroke="#108a28" stroke-width="3" stroke-dasharray="7 2"/>
        </svg>
        <span class="name" style="width:44px">行情</span>
        <span class="name" style="width:100px">上海双线11</span>
        <div class="icons">
            <svg width="20" height="20" viewBox="0 0 20 20"><rect x="1" y="1" width="18" height="18" rx="3" fill="#eef4fb" stroke="#6f97c4" stroke-width="1.6"/><rect x="6" y="9" width="8" height="4" fill="#d8c860"/></svg>
            <svg width="18" height="20" viewBox="0 0 18 20"><rect x="1" y="1" width="16" height="18" fill="#f6f6f6" stroke="#999" stroke-width="1.4"/><path d="M3 6h12M3 10h12M3 14h12" stroke="#bbb"/></svg>
            <svg width="18" height="20" viewBox="0 0 18 20"><ellipse cx="9" cy="10" rx="8" ry="9.5" fill="#e8c820" stroke="#a08a10"/><path d="M9 5v9M6 8l3-3 3 3" fill="none" stroke="#6a5a00" stroke-width="1.5"/></svg>
            <svg width="10" height="20" viewBox="0 0 10 20"><path d="M1 1h9v18H1z" fill="#aaa"/></svg>
        </div>
        `;
    }
}

class Taskbar extends HTMLElement {
    constructor() {
        super();
        this.attachShadow({ mode: "open" });
        this.shadowRoot.innerHTML = `
        <style>
        :host{display:flex;height:60px;background:#232a38;align-items:center;white-space:nowrap;color:#fff;overflow:hidden;}
        svg{display:block;flex:none;}
        .box{flex:none;width:275px;height:43px;margin-left:22px;background:#ececec;display:flex;align-items:center;font-size:15px;color:#333;}
        .box .q{flex:1;}
        .box .arrow{font-size:8px;color:#999;width:20px;text-align:center;}
        .box .go{width:70px;height:100%;background:#2a8ce8;color:#fff;text-align:center;line-height:43px;font-size:15.5px;}
        .slot{flex:none;height:60px;box-sizing:border-box;border-bottom:4px solid #6ea6d8;display:flex;align-items:center;justify-content:center;padding-top:3px;}
        .slot.active{background:rgba(255,255,255,.13);}
        .batt{flex:none;width:62px;height:33px;box-sizing:border-box;border:3px solid #fff;outline:1px solid #123;outline-offset:-4px;background:#1f9a50;text-align:center;
            font-size:19px;line-height:26px;color:#e8f4ea;margin-left:2px;}
        .nub{flex:none;width:5px;height:14px;background:#ddd;border-radius:0 3px 3px 0;}
        .ime{flex:none;width:24px;margin-left:11px;font-size:24px;line-height:30px;text-align:center;}
        .gauge{flex:none;position:relative;width:32px;height:35px;margin-left:12px;font-size:15px;font-weight:700;line-height:37px;text-align:center;color:#d8f4e2;}
        .gauge svg{position:absolute;left:0;top:0;}
        .gauge span{position:relative;}
        .clock{flex:none;width:108px;margin-left:14px;text-align:center;font-size:19px;line-height:25px;color:#eee;}
        .note{flex:none;position:relative;width:25px;height:60px;margin-left:20px;}
        .note svg{position:absolute;left:0;top:17px;}
        .badge{position:absolute;left:17px;top:32px;width:8px;height:16px;background:#d81818;}
        </style>
        <svg width="25" height="36" viewBox="0 0 25 36"><circle cx="15" cy="16" r="9.5" fill="none" stroke="#fff" stroke-width="1.4"/><path d="M8 23L0 34" stroke="#fff" stroke-width="1.6"/></svg>
        <svg width="26" height="26" viewBox="0 0 26 26" style="margin-left:46px"><circle cx="13" cy="13" r="10" fill="none" stroke="#e4e4e4" stroke-width="4.5"/></svg>
        <svg width="24" height="32" viewBox="0 0 24 32" style="margin-left:48px"><path d="M1 1v5h14V1M1 31v-5h14v5M1 10h14v12H1z M21 1v11M21 15v16" fill="none" stroke="#fff" stroke-width="1.3"/></svg>
        <svg width="33" height="33" viewBox="0 0 33 33" style="margin-left:46px">
            <rect width="33" height="33" rx="9" fill="#fff"/>
            <g fill="none" stroke="#232a38" stroke-width="2.6">
                <path d="M16.5 16.5C10 13 10 6 16.5-1"/>
                <path d="M16.5 16.5C20 10 27 10 34 16.5"/>
                <path d="M16.5 16.5C23 20 23 27 16.5 34"/>
                <path d="M16.5 16.5C13 23 6 23-1 16.5"/>
            </g>
        </svg>
        <div class="box">
            <svg width="24" height="26" viewBox="0 0 24 26" style="margin-left:8px">
                <defs><linearGradient id="ie" x1="0" y1="0" x2="0" y2="1"><stop offset="0" stop-color="#7cc8f4"/><stop offset="1" stop-color="#1f7ed8"/></linearGradient></defs>
                <path d="M5 14h15C20 7 16 4 12 4 6 4 3 9 3 14c0 6 4 9 9 9 3 0 6-1 8-4" fill="none" stroke="url(#ie)" stroke-width="4"/>
                <path d="M22 3C17 0 6 7 2 22" fill="none" stroke="#6cc0f0" stroke-width="1.3"/>
            </svg>
            <span class="arrow">▲</span>
            <span class="q">会声会影</span>
            <span class="go">搜索一下</span>
        </div>
        <svg width="32" height="32" viewBox="0 0 32 32" style="margin-left:27px"><path d="M6 18h20C26 8 21 4 15 4 8 4 3 10 3 17c0 8 6 12 12 12 4 0 7-1 10-3v-5c-3 2-6 3-9 3-5 0-8-3-9-6" fill="none" stroke="#1277d4" stroke-width="4.6"/></svg>
        <div class="slot" style="width:60px;margin-left:29px">
            <svg width="34" height="34" viewBox="0 0 34 34"><path d="M1 4h12l3 4h17v24H1z" fill="#e0b84c"/><rect x="1" y="10" width="32" height="22" fill="#f2cf6a"/><rect x="10" y="20" width="14" height="12" fill="#3a80c4"/><rect x="14" y="24" width="6" height="8" fill="#f2cf6a"/></svg>
        </div>
        <div class="slot" style="width:68px;margin-left:6px;padding-left:8px">
            <svg width="30" height="36" viewBox="0 0 30 36"><circle cx="15" cy="17" r="14" fill="#49b83e"/><path d="M8 17h14C22 12 19 9 15 9 10 9 7 13 7 18c0 5 4 8 8 8 3 0 5-1 7-3" fill="none" stroke="#f2f6e6" stroke-width="3"/><path d="M3 32c4 3 14 3 20 0" fill="none" stroke="#2e8a2a" stroke-width="2"/></svg>
        </div>
        <div class="slot" style="width:61px;margin-left:15px">
            <svg width="36" height="36" viewBox="0 0 36 36"><rect width="36" height="36" rx="8" fill="#3a5cd8"/><path d="M10 9h16v12l-4 7h-3v-7h-2v7h-3l-4-7z" fill="#f4f4ff"/><circle cx="18" cy="15" r="4" fill="#3a5cd8"/></svg>
        </div>
        <div class="slot" style="width:67px;margin-left:14px">
            <svg width="38" height="36" viewBox="0 0 38 36"><rect width="38" height="36" rx="3" fill="#f6dcae"/><path d="M0 3q0-3 3-3h14v14H0z" fill="#5c9a70"/><path d="M22 0h13q3 0 3 3v12H22z" fill="#6aa878"/><path d="M14 0h10L20 36h-8z" fill="#fff2d8"/><circle cx="21" cy="14" r="5" fill="#d8243a"/></svg>
        </div>
        <div class="slot active" style="width:74px;margin-left:1px">
            <svg width="37" height="36" viewBox="0 0 37 36"><rect width="37" height="36" fill="#cc1a22"/><path d="M6 8l10 20h4L32 6l-9 4-4 9-4-8z" fill="#fff"/></svg>
        </div>
        <svg width="18" height="33" viewBox="0 0 18 33" style="margin-left:221px"><path d="M4 0h3v9H4zM11 0h3v9h-3zM1 9h16v7c0 3-2 5-6 6v11H7V22c-4-1-6-3-6-6z" fill="#fff"/></svg>
        <div class="batt">100%</div>
        <div class="nub"></div>
        <svg width="18" height="10" viewBox="0 0 18 10" style="margin-left:10px"><path d="M1 9l8-8 8 8" fill="none" stroke="#ddd" stroke-width="1.3"/></svg>
        <svg width="24" height="24" viewBox="0 0 24 24" style="margin-left:15px"><circle cx="12" cy="12" r="12" fill="#1f6a2a"/><path d="M3 9Q9 0 19 5q-4 0-6 3H8q-3 0-5 1zM21 15q-6 9-16 4 4 0 6-3h5q3 0 5-1z" fill="#e8d820"/><circle cx="12" cy="12" r="7.5" fill="#e8d820"/><path d="M12 7v10M7 12h10" stroke="#2a8a2a" stroke-width="3"/></svg>
        <svg width="21" height="24" viewBox="0 0 21 24" style="margin-left:13px"><ellipse cx="10.5" cy="12" rx="10.5" ry="11.5" fill="#a8d878"/><path d="M5 12.5h10.5C15.5 8.5 13 7 10.5 7 7 7 5 9.5 5 12.5c0 3.5 2.5 5.5 5.5 5.5 2 0 3.500-.7 4.500-2" fill="none" stroke="#f4fae8" stroke-width="2.3"/></svg>
        <svg width="20" height="20" viewBox="0 0 20 20" style="margin-left:18px"><path d="M1 19C1 9 9 2 19 1M6 19C6 12 11 7 17 6M11 19c0-4 2-7 6-8" fill="none" stroke="#b8b8b8" stroke-width="1.2"/><circle cx="17" cy="18" r="1.6" fill="#eee"/></svg>
        <svg width="24" height="22" viewBox="0 0 24 22" style="margin-left:12px"><path d="M1 7h4l6-6v20l-6-6H1z" fill="none" stroke="#ddd" stroke-width="1.2"/><path d="M14 7q2.500 4 0 8M18 4q4 7 0 14" fill="none" stroke="#ccc" stroke-width="1.2"/></svg>
        <div class="ime">中</div>
        <div class="gauge">
            <svg width="32" height="35" viewBox="0 0 32 35"><ellipse cx="16" cy="17.500" rx="16" ry="17.500" fill="#18b868"/><path d="M3 10Q16-6 29 10" fill="none" stroke="#0e5a34" stroke-width="3"/></svg>
            <span>61</span>
        </div>
        <div class="clock">0:03 周一<br>2021/2/15</div>
        <div class="note">
            <svg width="17" height="23" viewBox="0 0 17 23"><path d="M0 0h17v23H0z" fill="#f4f4f4"/><path d="M3 6h11M3 11h11M3 16h6" stroke="#232a38" stroke-width="2"/></svg>
            <div class="badge"></div>
        </div>
        `;
    }
}

class FloatWindow extends HTMLElement {
    constructor() {
        super();
        this.attachShadow({ mode: "open" });
        this.shadowRoot.innerHTML = `
        <style>
        :host{position:absolute;left:1525px;top:18px;width:54px;height:64px;display:block;
            font-family:"Liberation Sans",Arial,sans-serif;}
        .top{display:flex;height:38px;}
        .name{width:22px;background:#f2f2f2;color:#8a8a8a;font-size:16px;line-height:34px;padding-left:2px;box-sizing:border-box;}
        .close{flex:1;background:#c8c8c8;color:#f2f2f2;text-align:center;font-size:15px;line-height:34px;}
        .start{height:26px;box-sizing:border-box;border:2px solid #2b6ea8;outline:1px solid #f2f2f2;outline-offset:-3px;
            background:#e4e4e4;color:#111;text-align:center;font-size:12px;line-height:22px;}
        </style>
        <div class="top"><div class="name">P..</div><div class="close">×</div></div>
        <div class="start">Start</div>
        `;
    }
}

class Caption extends HTMLElement {
    constructor() {
        super();
        this.attachShadow({ mode: "open" });
        this.shadowRoot.innerHTML = `
        <style>
        :host{position:absolute;left:566px;top:988px;width:598px;height:57px;display:block;background:rgba(22,22,22,.82);
            color:#fff;font-size:54.5px;line-height:30px;text-align:center;white-space:nowrap;}
        </style>
        <slot></slot>
        `;
    }
}

class Cursor extends HTMLElement {
    constructor() {
        super();
        this.attachShadow({ mode: "open" });
        this.shadowRoot.innerHTML = `
        <style>:host{position:absolute;display:block;width:18px;height:25px;}svg{display:block;}</style>
        <svg width="18" height="25" viewBox="0 0 18 25"><path d="M1 1v19l5-4 3.5 8 3.2-1.4-3.4-7.8H16z" fill="#fff" stroke="#111" stroke-width=".8"/></svg>
        `;
    }
}

customElements.define("tdx-legend-icons", LegendIcons);
customElements.define("tdx-menubar", MenuBar);
customElements.define("tdx-period-bar", PeriodBar);
customElements.define("tdx-price-chart", PriceChart);
customElements.define("tdx-volume-chart", VolumeChart);
customElements.define("tdx-macd-chart", MacdChart);
customElements.define("tdx-kdj-chart", KdjChart);
customElements.define("tdx-time-axis", TimeAxis);
customElements.define("tdx-tool-row", ToolRow);
customElements.define("tdx-tab-row", TabRow);
customElements.define("tdx-bottom-tabs", BottomTabs);
customElements.define("tdx-side-panel", SidePanel);
customElements.define("tdx-status-bar", StatusBar);
customElements.define("tdx-taskbar", Taskbar);
customElements.define("tdx-float-window", FloatWindow);
customElements.define("tdx-caption", Caption);
customElements.define("tdx-cursor", Cursor);

})();
</script>
</body>
</html>
